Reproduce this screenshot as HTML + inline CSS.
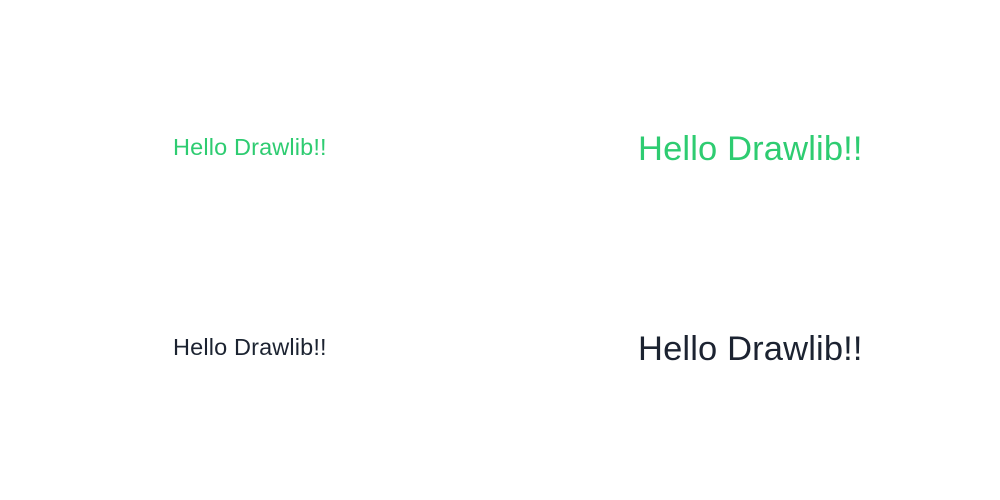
<!DOCTYPE html>
<html><head><meta charset="utf-8"><style>
html,body{margin:0;padding:0;background:#fff;width:1000px;height:500px;overflow:hidden;position:relative}
.t{position:absolute;font-family:"Liberation Sans",sans-serif;line-height:1;white-space:nowrap}
.s{font-size:23.5px;left:173px;letter-spacing:0.15px}
.r{font-size:34.5px;left:638px;letter-spacing:0.15px}
.g{color:#2ecc71}.d{color:#1c2331}
</style></head><body>
<div class="t s g" style="top:135.5px">Hello Drawlib!!</div>
<div class="t r g" style="top:131.5px">Hello Drawlib!!</div>
<div class="t s d" style="top:335.5px">Hello Drawlib!!</div>
<div class="t r d" style="top:331.5px">Hello Drawlib!!</div>
</body></html>
